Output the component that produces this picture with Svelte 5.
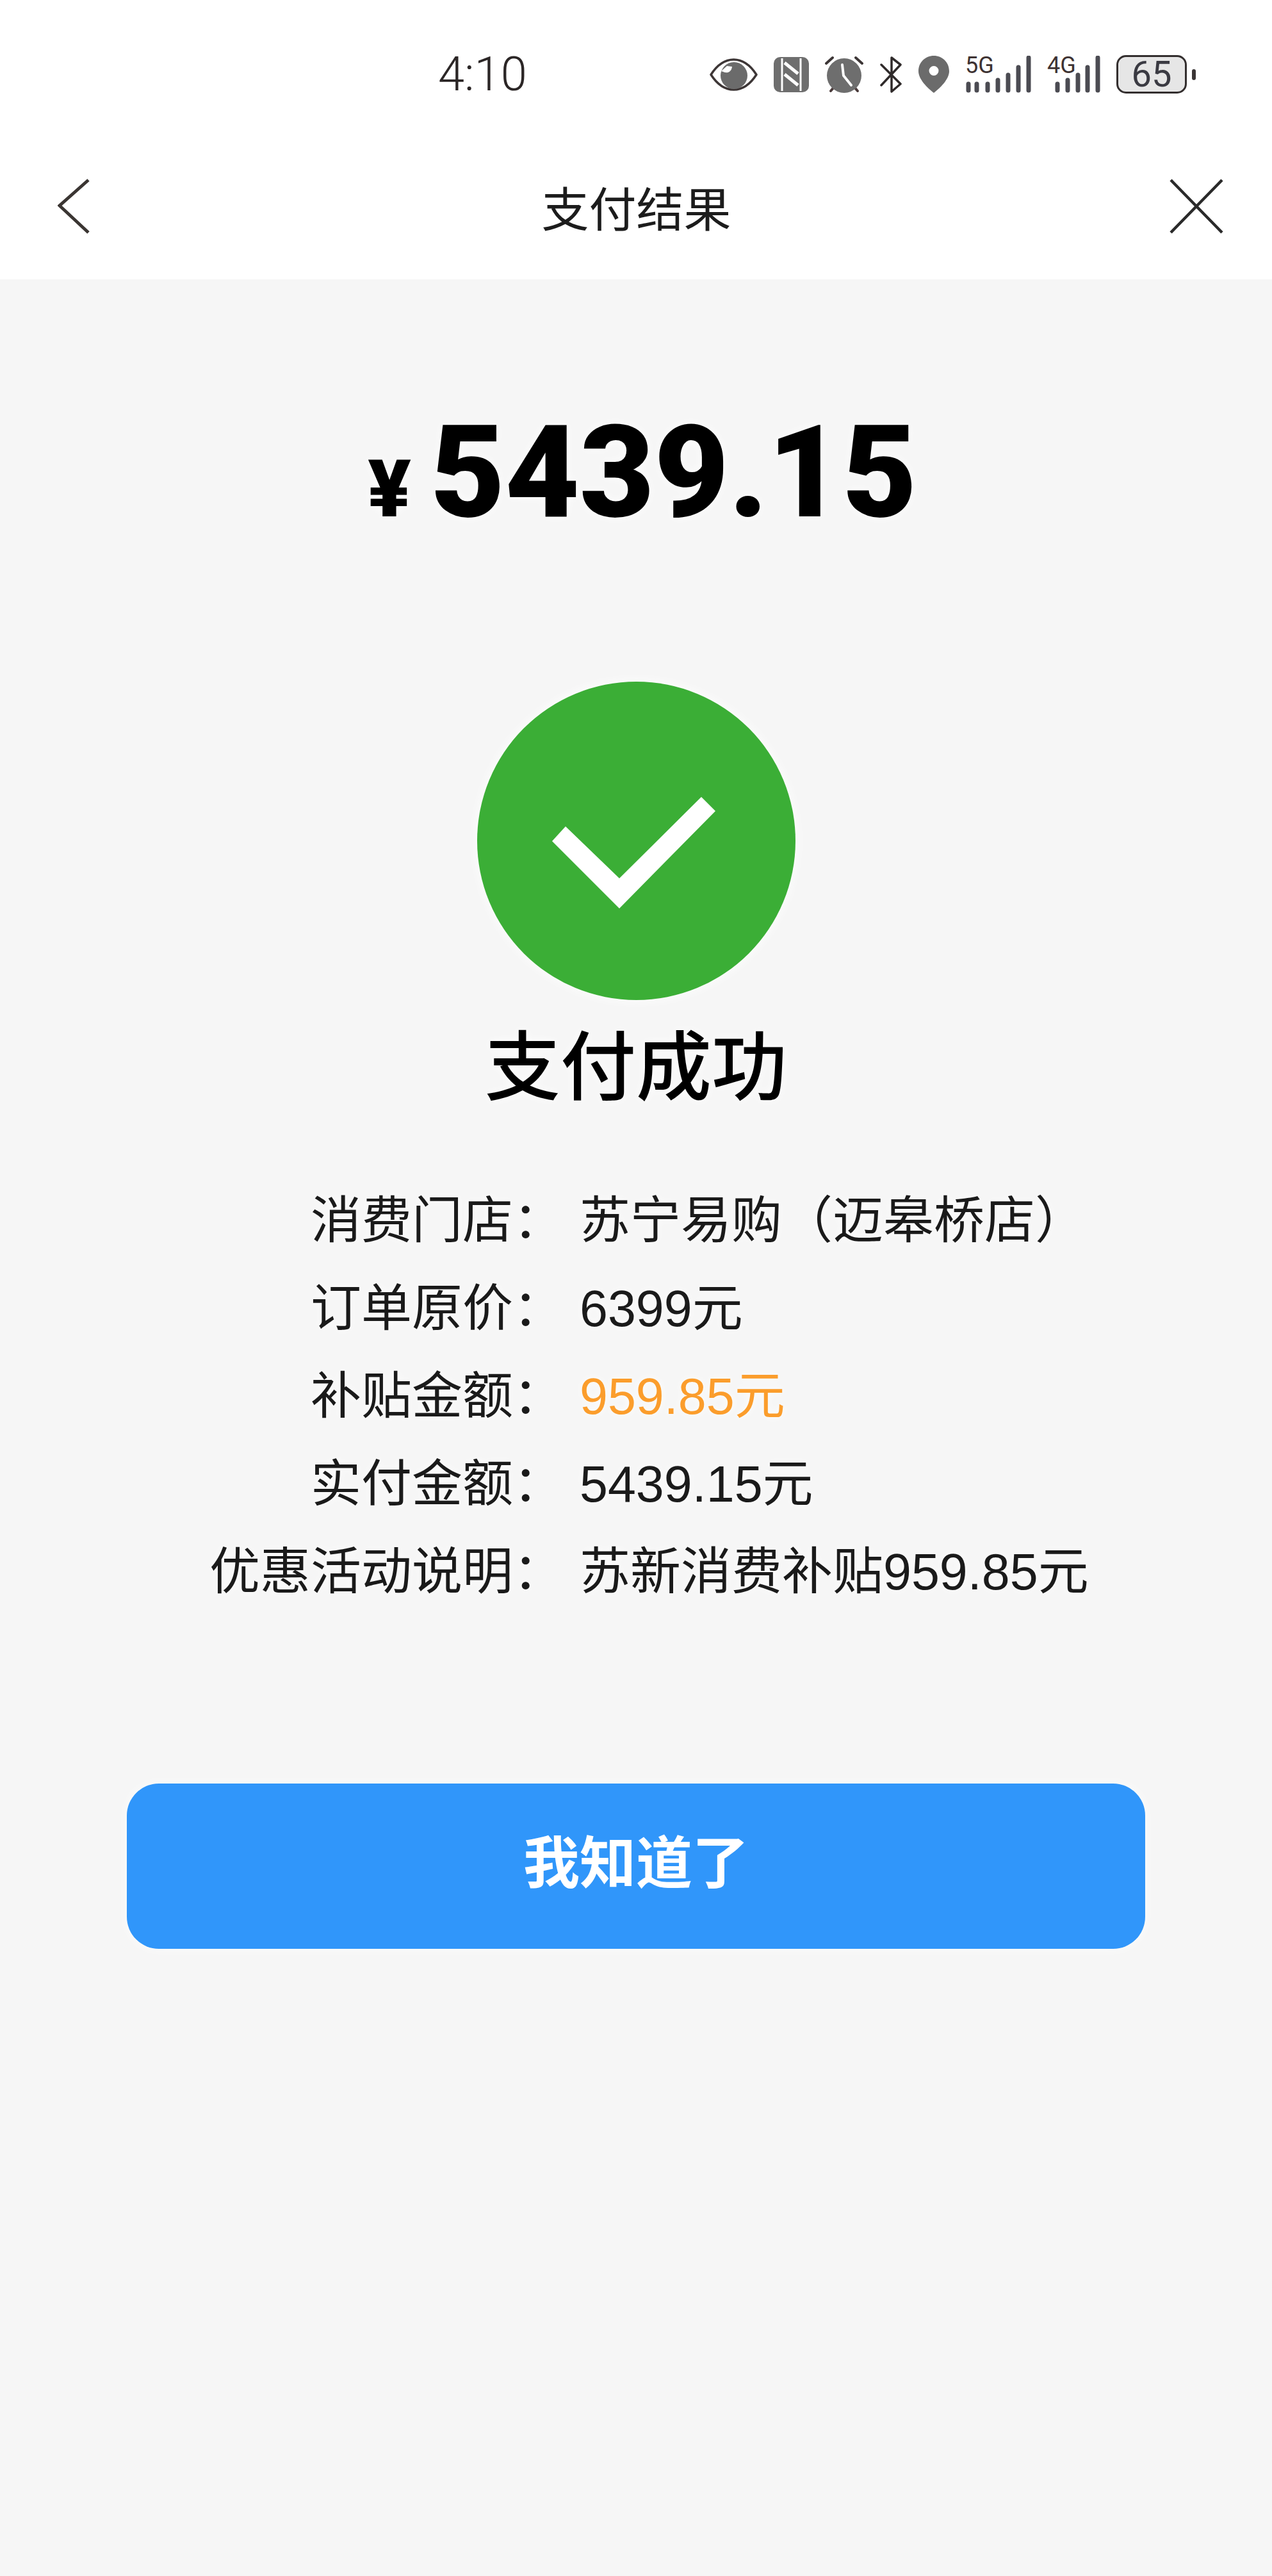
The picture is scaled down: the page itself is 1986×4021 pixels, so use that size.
<script>
  const rows = [
    { label: '消费门店：', value: '苏宁易购（迈皋桥店）' },
    { label: '订单原价：', value: '6399元' },
    { label: '补贴金额：', value: '959.85元', highlight: true },
    { label: '实付金额：', value: '5439.15元' },
    { label: '优惠活动说明：', value: '苏新消费补贴959.85元' }
  ];
  const bars5g = [[5, 41], [18, 41], [35, 41], [51, 35], [67, 27], [83, 15], [99, 0]];
  const bars4g = [[16, 41], [32, 35], [48, 27], [63, 15], [79, 0]];
</script>

<div class="page">
  <header class="top">
    <div class="status">
      <span class="time">4:10</span>
      <div class="status-icons">
        <svg width="75" height="51" viewBox="0 0 75 51">
          <path d="M2 25.500C12 10 24 2 37.500 2S63 10 73 25.500C63 41 51 49 37.500 49S12 41 2 25.500Z" fill="#fff" stroke="#3d3636" stroke-width="3.500" stroke-linejoin="round" />
          <circle cx="38" cy="27" r="21" fill="#6b6b6b" />
          <path d="M21 21c6 3 13 1 14-8l-8-1-9 8z" fill="#fff" />
        </svg>
        <svg width="55" height="55" viewBox="0 0 55 55">
          <rect width="55" height="55" rx="10" fill="#6e6e6e" />
          <path d="M13 2v51M42 2v51" stroke="#fff" stroke-width="3" />
          <path d="M17 9 38 26M17 27 38 44" stroke="#fff" stroke-width="5" />
        </svg>
        <svg width="60" height="58" viewBox="0 0 60 58">
          <path d="M2 12 12 3M58 12 48 3" stroke="#3d3636" stroke-width="4" stroke-linecap="round" />
          <path d="M9 55 15 48M51 55 45 48" stroke="#4a3a3a" stroke-width="4" stroke-linecap="round" />
          <circle cx="30" cy="31" r="27" fill="#6e6e6e" />
          <path d="M27 14 29 31 41 46" fill="none" stroke="#fff" stroke-width="4" stroke-linecap="round" />
        </svg>
        <svg width="36" height="58" viewBox="0 0 36 58">
          <path d="M3 14 33 44 19 56V3L33 14 3 46" fill="none" stroke="#2f2a2a" stroke-width="3.500" stroke-linejoin="round" stroke-linecap="round" />
        </svg>
        <svg width="48" height="58" viewBox="0 0 48 58">
          <path fill-rule="evenodd" d="M24 0C37 0 48 10 48 24 48 37 34 50 24 58 14 50 0 37 0 24 0 10 11 0 24 0ZM24 16a7.500 7.500 0 1 0 0 15 7.500 7.500 0 0 0 0-15Z" fill="#6b6b6b" />
        </svg>
        <div class="signal signal-5g">
          <span class="net">5G</span>
          <svg width="103" height="58" viewBox="0 0 103 58">
            {#each bars5g as [x, top]}
              <line x1={x} x2={x} y1={top + 3} y2="54" stroke="#4b4b52" stroke-width="7" stroke-linecap="round" />
            {/each}
          </svg>
        </div>
        <div class="signal signal-4g">
          <span class="net">4G</span>
          <svg width="83" height="58" viewBox="0 0 83 58">
            {#each bars4g as [x, top]}
              <line x1={x} x2={x} y1={top + 3} y2="54" stroke="#4b4b52" stroke-width="7" stroke-linecap="round" />
            {/each}
          </svg>
        </div>
        <div class="battery">
          <span class="battery-body">65</span>
          <span class="battery-nub"></span>
        </div>
      </div>
    </div>
    <nav class="nav">
      <svg class="back" width="50" height="86" viewBox="0 0 50 86">
        <path d="M48 2 3 42 48 84" fill="none" stroke="#3a3532" stroke-width="5" />
      </svg>
      <h1>支付结果</h1>
      <svg class="close" width="84" height="86" viewBox="0 0 84 86">
        <path d="M2 2 82 84M82 2 2 84" fill="none" stroke="#2a2a2a" stroke-width="4.500" />
      </svg>
    </nav>
  </header>

  <main class="content">
    <div class="amount">
      <span class="currency">¥</span>
      <span class="digits">5439.15</span>
    </div>

    <div class="success-icon">
      <svg width="258" height="176" viewBox="0 0 258 176">
        <path d="M0 69 21 46 105 127 233 0 255 22 105 174Z" fill="#fff" />
      </svg>
    </div>
    <h2>支付成功</h2>

    <dl class="details">
      {#each rows as row}
        <dt>{row.label}</dt>
        <dd class:highlight={row.highlight}>{row.value}</dd>
      {/each}
    </dl>

    <button type="button" class="confirm">我知道了</button>
  </main>
</div>

<style>
  :global(body) {
    background: #f6f6f6;
  }

  .page {
    min-height: 4021px;
    background: #f6f6f6;
    font-family: "Noto Sans CJK SC", "Liberation Sans", sans-serif;
    color: #111;
  }

  .top {
    height: 436px;
    background: #fff;
  }

  .status {
    display: flex;
    align-items: center;
    justify-content: space-between;
    height: 232px;
    padding: 0 119px 0 684px;
    box-sizing: border-box;
  }

  .time {
    font-family: Roboto, sans-serif;
    font-weight: 300;
    font-size: 74px;
    line-height: 1;
    color: #2b2626;
  }

  .status-icons {
    display: flex;
    align-items: center;
    gap: 25px;
  }

  .status-icons svg {
    display: block;
  }

  .signal {
    position: relative;
  }

  .net {
    position: absolute;
    top: -3px;
    left: 0;
    font-family: Roboto, sans-serif;
    font-size: 36px;
    line-height: 36px;
    color: #3d3232;
  }

  .battery {
    display: flex;
    align-items: center;
    gap: 8px;
  }

  .battery-body {
    display: flex;
    align-items: center;
    justify-content: center;
    box-sizing: border-box;
    width: 110px;
    height: 60px;
    border: 3px solid #332e2e;
    border-radius: 15px;
    background: #e6e6e6;
    font-family: Roboto, sans-serif;
    font-size: 56px;
    color: #3a3a42;
  }

  .battery-nub {
    width: 6px;
    height: 17px;
    border-radius: 3px;
    background: #3a3535;
  }

  .nav {
    display: grid;
    grid-template-columns: 1fr auto 1fr;
    align-items: center;
    height: 182px;
    padding: 0 76px 0 90px;
    margin-top: -1px;
  }

  .nav svg {
    display: block;
  }

  .close {
    justify-self: end;
  }

  h1 {
    margin: 0 13px 0 0;
    font-size: 74px;
    font-weight: 400;
    line-height: 1;
    color: #1c1c1c;
  }

  .content {
    display: flex;
    flex-direction: column;
    align-items: center;
  }

  .amount {
    display: flex;
    align-items: baseline;
    gap: 30px;
    margin-top: 201px;
    margin-left: 20px;
    font-family: Roboto, "Liberation Sans", sans-serif;
    font-weight: 900;
    line-height: 1;
    color: #000;
    text-shadow: 0 0 14px #fff;
  }

  .currency {
    font-size: 125px;
  }

  .digits {
    font-size: 201px;
  }

  .success-icon {
    display: flex;
    align-items: center;
    justify-content: center;
    width: 497px;
    height: 497px;
    margin-top: 226px;
    border-radius: 50%;
    background: #3bae36;
    box-shadow: 0 0 18px #fff;
  }

  .success-icon svg {
    display: block;
    margin-top: 38px;
    margin-left: -4px;
  }

  h2 {
    margin: 25px 0 0;
    font-size: 118px;
    font-weight: 500;
    line-height: 1.2;
    color: #000;
    text-shadow: 0 0 14px #fff;
  }

  .details {
    display: grid;
    grid-template-columns: 880px 1fr;
    column-gap: 25px;
    width: 100%;
    margin: 109px 0 0;
    font-family: "Liberation Sans", "Noto Sans CJK SC", sans-serif;
    font-size: 79px;
    line-height: 137px;
    font-weight: 400;
    color: #1a1a1a;
    text-shadow: 0 0 12px #fff;
  }

  dt {
    text-align: right;
  }

  dd {
    margin: 0;
  }

  .highlight {
    color: #fb9d2c;
  }

  .confirm {
    display: block;
    width: 1590px;
    height: 258px;
    margin-top: 262px;
    padding: 0 0 24px;
    border: none;
    border-radius: 50px;
    background: #3096fa;
    color: #fff;
    font-family: inherit;
    font-size: 88px;
    font-weight: 700;
    box-shadow: 0 0 16px rgba(255, 255, 255, 0.8);
  }
</style>
